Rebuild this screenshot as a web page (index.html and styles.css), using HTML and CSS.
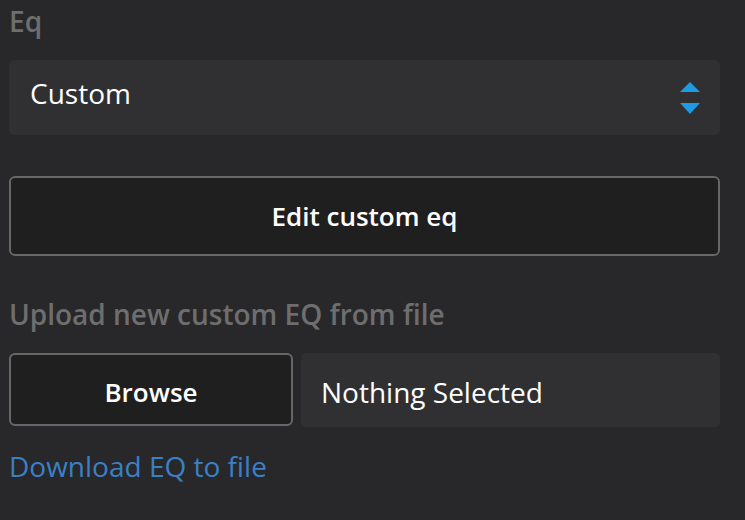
FILE: index.html
```html
<!DOCTYPE html>
<html>
<head>
<meta charset="utf-8">
<link rel="stylesheet" href="styles.css">
</head>
<body>
<div class="panel">
  <div class="label">Eq</div>
  <div class="select">
    <span class="select-value">Custom</span>
    <svg class="arrows" width="20" height="32" viewBox="0 0 20 32">
      <polygon points="10,0 20,10 0,10" fill="#1a9be2"/>
      <polygon points="0,21 20,21 10,32" fill="#1a9be2"/>
    </svg>
  </div>
  <button class="btn btn-wide">Edit custom eq</button>
  <div class="label label-upload">Upload new custom EQ from file</div>
  <div class="file-row">
    <button class="btn btn-browse">Browse</button>
    <div class="file-name">Nothing Selected</div>
  </div>
  <a class="link" href="#">Download EQ to file</a>
</div>
</body>
</html>
```
FILE: styles.css
```css
html, body {
  margin: 0;
  padding: 0;
  background: #28282b;
  font-family: "Open Sans", sans-serif;
  font-size: 28px;
  line-height: 42px;
  color: #ffffff;
}
.panel {
  width: 711px;
  padding-left: 9px;
  display: flex;
  flex-direction: column;
}
.label {
  font-weight: 600;
  color: #6e6e6e;
  height: 42px;
}
.select {
  margin-top: 18px;
  height: 75px;
  background: #303033;
  border-radius: 5px;
  display: flex;
  align-items: center;
  justify-content: space-between;
  padding: 0 20px 0 21px;
  box-sizing: border-box;
}
.select-value {
  position: relative;
  top: -5px;
}
.arrows {
  display: block;
}
.btn {
  font-family: "Open Sans", sans-serif;
  font-size: 26px;
  font-weight: 600;
  color: #ffffff;
  background: #1f1f1f;
  border: 2px solid #676767;
  border-radius: 6px;
  box-sizing: border-box;
  padding: 0;
  line-height: 40px;
}
.btn-wide {
  margin-top: 41px;
  height: 80px;
  width: 100%;
}
.label-upload {
  margin-top: 37px;
}
.file-row {
  margin-top: 18px;
  display: flex;
  gap: 8px;
  height: 74px;
}
.btn-browse {
  width: 284px;
  height: 73px;
  flex: none;
  padding-top: 5px;
}
.file-name {
  flex: 1;
  background: #303033;
  border-radius: 5px;
  display: flex;
  align-items: center;
  padding-left: 20px;
  padding-top: 3px;
}
.link {
  margin-top: 18px;
  color: #3a80c6;
  text-decoration: none;
  align-self: flex-start;
}
```
